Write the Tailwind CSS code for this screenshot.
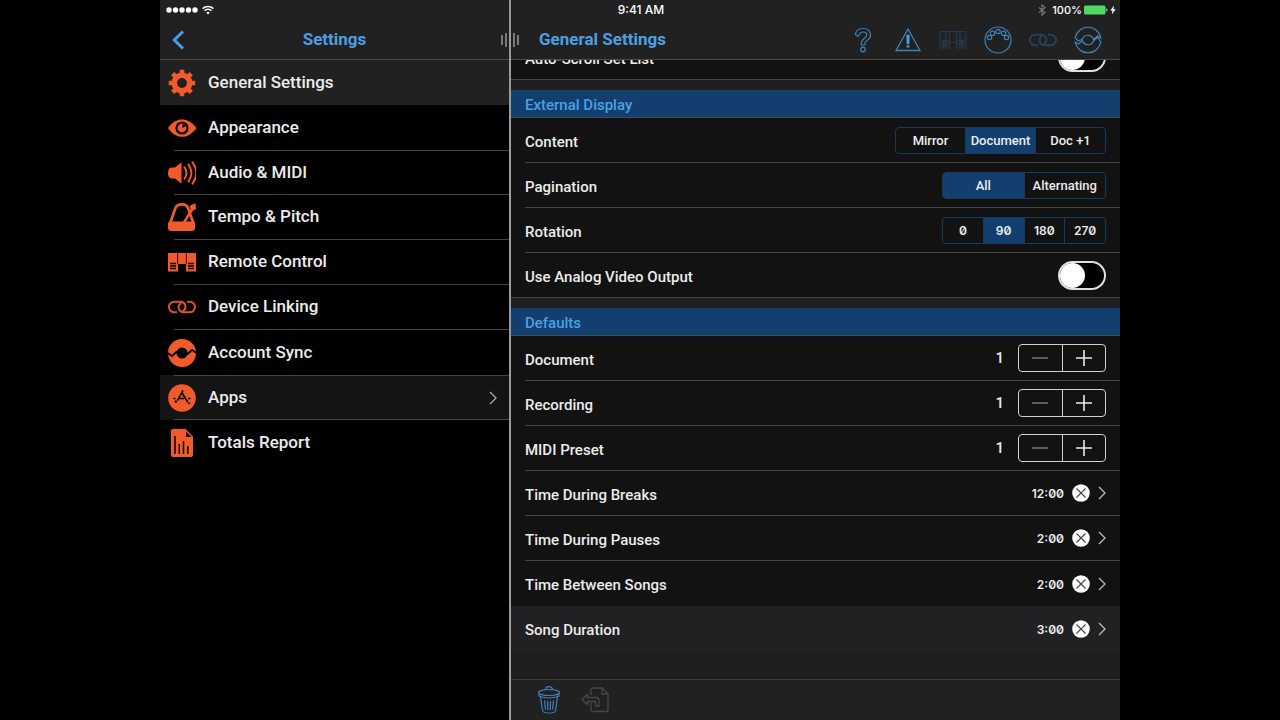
<!doctype html>
<html lang="en">
<head>
  <meta charset="UTF-8">
  <meta name="viewport" content="width=device-width, initial-scale=1.0">
  <title>General Settings</title>
  <script src="https://cdn.jsdelivr.net/npm/@tailwindcss/browser@4"></script>
</head>
<body class="bg-black font-['Roboto',sans-serif] text-white">
  <!-- Shared icons -->
  <svg class="hidden" aria-hidden="true">
    <symbol id="chevron" viewBox="0 0 8 14"><path d="M1 1l6 6-6 6" fill="none" stroke="currentColor" stroke-width="1.3" /></symbol>
    <symbol id="clear" viewBox="0 0 18 18"><circle cx="9" cy="9" r="8.8" fill="#fff" /><path d="M4.5 4.5l9 9M13.5 4.5l-9 9" stroke="#444" stroke-width="1.1" /></symbol>
    <symbol id="minus" viewBox="0 0 16 16"><path d="M0 8h16" stroke="currentColor" stroke-width="1.3" /></symbol>
    <symbol id="plus" viewBox="0 0 16 16"><path d="M0 8h16M8 0v16" stroke="currentColor" stroke-width="1.6" /></symbol>
    <symbol id="link" viewBox="0 0 28 28">
      <path d="M9 19.300H6.300a5.300 5.300 0 0 1 0-10.600H13a4.900 4.900 0 0 1 1.800 9.200M19 8.700h2.700a5.300 5.300 0 0 1 0 10.600H15a4.900 4.900 0 0 1-1.800-9.200" fill="none" stroke="currentColor" />
    </symbol>
  </svg>

  <div class="relative mx-auto flex h-screen w-3/4">
    <!-- Status bar -->
    <div class="absolute inset-x-0 top-0 z-10 grid h-5 grid-cols-3 items-center pl-1.5 pr-1 font-['Inter',sans-serif] text-xs font-medium">
      <div class="flex items-center gap-1">
        <svg class="h-2 w-8" viewBox="0 0 32 8" fill="#fff"><circle cx="3" cy="4" r="2.7" /><circle cx="9.500" cy="4" r="2.7" /><circle cx="16" cy="4" r="2.7" /><circle cx="22.500" cy="4" r="2.7" /><circle cx="29" cy="4" r="2.7" /></svg>
        <svg class="h-2.5 w-3" viewBox="0 0 12 10" fill="none" stroke="#fff" stroke-width="1.5"><path d="M.6 3.600a7.700 7.700 0 0 1 10.800 0M2.500 5.800a5 5 0 0 1 7 0" /><path d="M4.300 7.600a2.500 2.500 0 0 1 3.400 0L6 9.400z" fill="#fff" stroke="none" /></svg>
      </div>
      <span class="text-center">9:41 AM</span>
      <div class="flex items-center justify-end gap-0.5">
        <svg class="mr-1 h-3 w-2" viewBox="0 0 8 12" fill="none" stroke="#77777a" stroke-width="1.1"><path d="M1 3.500l6 5L4 11.200V.8l3 2.700-6 5" /></svg>
        <span class="text-[11px]">100%</span>
        <svg class="h-2.5 w-6" viewBox="0 0 24 10"><rect x="0" y=".5" width="21.500" height="9" rx="1.500" fill="#4cd964" /><path d="M22.300 3.200a2 2 0 0 1 0 3.600z" fill="#ddd" /></svg>
        <svg class="h-2.5 w-1.5" viewBox="0 0 6 10" fill="#fff"><path d="M4 .5L.3 5.600h2.200L1.800 9.500l3.900-5.300H3.400z" /></svg>
      </div>
    </div>

    <!-- Sidebar -->
    <aside class="flex w-[349px] shrink-0 flex-col">
      <header class="flex h-15 items-center border-b border-[#4a4a4b] bg-[#212122] px-3 pt-5">
        <button class="w-8 text-[#4aa0e2]" aria-label="Back">
          <svg class="h-5 w-3" viewBox="0 0 12 20" fill="none" stroke="currentColor" stroke-width="3"><path d="M11 1.500L2.300 10l8.700 8.500" /></svg>
        </button>
        <h2 class="flex-1 pr-8 text-center text-[17px] font-bold text-[#4aa0e2]">Settings</h2>
      </header>
      <nav class="text-[17px] font-medium text-[#ececec]">
        <a href="#" class="flex h-[45px] items-center gap-3 bg-[#212122] pl-2">
          <svg class="size-7" viewBox="0 0 28 28"><circle cx="14" cy="14" r="7.700" fill="none" stroke="#f15a29" stroke-width="5.500" /><path d="M14 .8v5M14 22.200v5M.8 14h5M22.200 14h5M4.700 4.700l3.500 3.500M19.800 19.800l3.500 3.500M4.700 23.300l3.500-3.500M19.800 8.200l3.500-3.500" stroke="#f15a29" stroke-width="4.600" stroke-linejoin="round" /></svg>
          General Settings
        </a>
        <a href="#" class="flex h-[45px] items-center pl-2">
          <svg class="mr-3 size-7" viewBox="0 0 28 28"><path d="M0 14C4 8 9 5.400 14 5.400S24 8 28.500 14C24 20 19 22.800 14 22.800S4 20 0 14z" fill="#f15a29" /><circle cx="14" cy="14" r="5.500" fill="none" stroke="#000" stroke-width="2.200" /><path d="M14.500 14V9.500L18 12z" fill="#000" /></svg>
          Appearance
        </a>
        <a href="#" class="ml-3.5 flex h-[45px] items-center border-y border-[#454545]">
          <svg class="-ml-1.5 mr-3 size-7" viewBox="0 0 28 28"><path d="M3 8.500h4l6.500-5.300v21.600L7 19.500H3q-3-1-3-5.500t3-5.500z" fill="#f15a29" /><path d="M16.500 8.200q4 5.800 0 11.600M20.500 5.600q6 8.400 0 16.800M24.500 3.300q7.500 10.700 0 21.400" fill="none" stroke="#f15a29" stroke-width="1.900" stroke-linecap="round" /></svg>
          Audio &amp; MIDI
        </a>
        <a href="#" class="ml-3.5 flex h-[45px] items-center border-b border-[#454545]">
          <svg class="-ml-1.5 mr-3 size-7" viewBox="0 0 28 28"><path d="M2 20.500L7.500 5q1.500-3.600 6.500-3.600 4.500 0 6 3.600l5.500 15.500" fill="none" stroke="#f15a29" stroke-width="2.700" /><path d="M0 20.500q0-2 2.500-2h22q2.500 0 2.500 2v4.200q0 3.300-3.300 3.300H3.300Q0 28 0 24.700z" fill="#f15a29" /><path d="M16 19.500L25 5" stroke="#f15a29" stroke-width="2.500" /><path d="M21.500 3l6-3 .5 6-4.500 2.500z" fill="#f15a29" /></svg>
          Tempo &amp; Pitch
        </a>
        <a href="#" class="ml-3.5 flex h-[45px] items-center border-b border-[#454545]">
          <svg class="-ml-1.5 mr-3 size-7" viewBox="0 0 28 28"><path d="M0 5h28v18.500H18V16h-8v7.500H0z" fill="#f15a29" /><path d="M9.700 5v11.500M18.300 5v11.500" stroke="#000" stroke-width=".8" /><path d="M2 15.500h6M2 18h6M2 20.500h6M20 15.500h6M20 18h6M20 20.500h6" stroke="#000" stroke-width="1.300" /></svg>
          Remote Control
        </a>
        <a href="#" class="ml-3.5 flex h-[45px] items-center border-b border-[#454545]">
          <svg class="-ml-1.5 mr-3 size-7 stroke-[2px] text-[#d9542b]"><use href="#link" /></svg>
          Device Linking
        </a>
        <a href="#" class="ml-3.5 flex h-[45px] items-center">
          <svg class="-ml-1.5 mr-3 size-7" viewBox="0 0 28 28"><circle cx="14" cy="14" r="14" fill="#f15a29" /><circle cx="14" cy="14" r="5.500" fill="#000" /><path d="M-.5 14l4.500 3 5-4.500M19 15.500l5-4.500 4.500 3" fill="none" stroke="#000" stroke-width="2" /></svg>
          Account Sync
        </a>
        <a href="#" class="flex h-[45px] items-center bg-[#141415] pl-3.5">
          <span class="flex h-full flex-1 items-center border-y border-[#454545]">
            <svg class="-ml-1.5 mr-3 size-7" viewBox="0 0 28 28"><circle cx="14" cy="14" r="13.800" fill="#f15a29" /><path d="M15 6.500l-5.500 10M13.500 8l6.500 10.500M5.500 14.500h2M10 14.500h6M20 14.500h2.500" fill="none" stroke="#000" stroke-width="1.600" /><path d="M8.300 16.500l-1 2.200M20.800 18.700l.8 1.200" stroke="#000" stroke-width="2" /></svg>
            Apps
            <svg class="ml-auto mr-3 h-3.5 w-2 text-[#aaa]"><use href="#chevron" /></svg>
          </span>
        </a>
        <a href="#" class="flex h-[45px] items-center gap-3 pl-2">
          <svg class="size-7" viewBox="0 0 28 28"><path d="M5 0h12.500L25 7.500V26q0 2-2 2H5q-2 0-2-2V2q0-2 2-2z" fill="#f15a29" /><path d="M18 2.500V8h5.500z" fill="#000" /><path d="M7 7v18M11.300 15v10M15.500 12v13M19.800 17v8" stroke="#000" stroke-width="1.500" /></svg>
          Totals Report
        </a>
      </nav>
    </aside>

    <!-- Detail pane -->
    <main class="relative flex min-w-0 flex-1 flex-col border-l-2 border-[#9a9a9a] bg-[#1f1f20]">
      <!-- Pane resize grip -->
      <svg class="absolute -left-2.5 top-8 h-4 w-5" viewBox="0 0 20 16" stroke="#b5b5b5" stroke-width="1.200"><path d="M1 3v10M5 1v14M13 1v14M17 3v10" /></svg>
      <header class="flex h-15 shrink-0 items-center justify-between border-b border-[#4a4a4b] bg-[#212122] pl-7 pr-4.5 pt-5">
        <h1 class="text-[17px] font-bold text-[#4aa0e2]">General Settings</h1>
        <div class="flex gap-[17px] text-[#3f81b8]">
          <button aria-label="Help"><svg class="size-7" viewBox="0 0 28 28" fill="none" stroke="currentColor" stroke-width="1.200"><path d="M6.500 8.500Q7 2.500 14 2.500t7.500 6.500q0 3.500-3.500 5.500-2.300 1.500-2.300 4.500h-3.500q0-4.500 3-6.500 2.500-1.500 2.500-3.500 0-3-3.500-3T10 9.500q-1.500 1.500-3.500-1z" /><circle cx="14" cy="23.500" r="2.300" /></svg></button>
          <button aria-label="Warnings"><svg class="size-7" viewBox="0 0 28 28" fill="none" stroke="currentColor" stroke-width="1.300"><path d="M14 3L26 24.500H2z" /><path d="M13 9.500h2l-.3 8h-1.400z" fill="#4aa0e2" stroke="#4aa0e2" /><path d="M14 19.500v2" stroke="#4aa0e2" stroke-width="3" /></svg></button>
          <button aria-label="Remote control" class="text-[#26384c]"><svg class="size-7" viewBox="0 0 28 28" fill="none" stroke="currentColor" stroke-width="1.200"><path d="M1 5.500h26V22H17.500v-5.500h-7V22H1zM7 5.500v8M10.500 5.500v11M17.500 5.500v11M21 5.500v8" /><path d="M3 14.500h6M3 17h6M3 19.500h6M19.500 14.500h6M19.500 17h6M19.500 19.500h6" stroke-width="1.800" /></svg></button>
          <button aria-label="MIDI"><svg class="size-7" viewBox="0 0 28 28" fill="none" stroke="currentColor" stroke-width="1.200"><circle cx="14" cy="14" r="13" /><circle cx="5.500" cy="11.500" r="2.200" /><circle cx="8.500" cy="7.300" r="2.200" /><circle cx="14" cy="5.500" r="2.200" /><circle cx="19.500" cy="7.300" r="2.200" /><circle cx="22.500" cy="11.500" r="2.200" /></svg></button>
          <button aria-label="Device linking" class="text-[#264059]"><svg class="size-7 stroke-[2px]"><use href="#link" /></svg></button>
          <button aria-label="Sync"><svg class="size-7" viewBox="0 0 28 28" fill="none" stroke="currentColor" stroke-width="1.200"><path d="M1.200 12a13 13 0 0 1 25.600 0l-3.300-2-4 3.500a5.800 5.800 0 0 0-11-.5L4.500 15zM26.800 16a13 13 0 0 1-25.600 0l3.300 2 4-3.500a5.800 5.800 0 0 0 11 .5l4-3.500z" /></svg></button>
        </div>
      </header>

      <div class="min-h-0 flex-1 overflow-hidden text-[15px] font-medium text-[#ececec]">
        <section class="-mt-[25px] mb-2.5 bg-[#121213]">
          <label class="flex h-[45px] items-center justify-between border-b border-[#454545] px-3.5">
            <span class="pt-1">Auto-Scroll Set List</span>
            <input type="checkbox" class="h-[29px] w-12 appearance-none rounded-full border-2 border-[#e0e0e0] bg-black before:block before:size-[25px] before:rounded-full before:bg-white checked:bg-[#123f6e] checked:before:ml-auto">
          </label>
        </section>

        <section class="mb-2.5 bg-[#121213]">
          <h3 class="flex h-7 items-center border-b border-[#37506b] bg-[#123f6e] px-3.5 pt-1 text-[#4aa0e2]">External Display</h3>
          <fieldset class="ml-3.5 flex h-[45px] items-center border-b border-[#454545] pr-3.5" aria-labelledby="content-label">
            <span id="content-label" class="flex-1 pt-1">Content</span>
            <div class="flex h-[27px] w-[211px] divide-x divide-[#17395f] overflow-hidden rounded border border-[#17395f] text-[13px]">
              <label class="relative flex flex-1 items-center justify-center pt-0.5 has-checked:bg-[#123f6e]"><input type="radio" name="content" class="sr-only">Mirror</label>
              <label class="relative flex flex-1 items-center justify-center pt-0.5 has-checked:bg-[#123f6e]"><input type="radio" name="content" class="sr-only" checked>Document</label>
              <label class="relative flex flex-1 items-center justify-center pt-0.5 has-checked:bg-[#123f6e]"><input type="radio" name="content" class="sr-only">Doc +1</label>
            </div>
          </fieldset>
          <fieldset class="ml-3.5 flex h-[45px] items-center border-b border-[#454545] pr-3.5" aria-labelledby="pagination-label">
            <span id="pagination-label" class="flex-1 pt-1">Pagination</span>
            <div class="flex h-[27px] w-41 divide-x divide-[#17395f] overflow-hidden rounded border border-[#17395f] text-[13px]">
              <label class="relative flex flex-1 items-center justify-center pt-0.5 has-checked:bg-[#123f6e]"><input type="radio" name="pagination" class="sr-only" checked>All</label>
              <label class="relative flex flex-1 items-center justify-center pt-0.5 has-checked:bg-[#123f6e]"><input type="radio" name="pagination" class="sr-only">Alternating</label>
            </div>
          </fieldset>
          <fieldset class="ml-3.5 flex h-[45px] items-center border-b border-[#454545] pr-3.5" aria-labelledby="rotation-label">
            <span id="rotation-label" class="flex-1 pt-1">Rotation</span>
            <div class="flex h-[27px] w-41 divide-x divide-[#17395f] overflow-hidden rounded border border-[#17395f] font-['Inter',sans-serif] text-xs font-semibold slashed-zero">
              <label class="relative flex flex-1 items-center justify-center pt-0.5 has-checked:bg-[#123f6e]"><input type="radio" name="rotation" class="sr-only">0</label>
              <label class="relative flex flex-1 items-center justify-center pt-0.5 has-checked:bg-[#123f6e]"><input type="radio" name="rotation" class="sr-only" checked>90</label>
              <label class="relative flex flex-1 items-center justify-center pt-0.5 has-checked:bg-[#123f6e]"><input type="radio" name="rotation" class="sr-only">180</label>
              <label class="relative flex flex-1 items-center justify-center pt-0.5 has-checked:bg-[#123f6e]"><input type="radio" name="rotation" class="sr-only">270</label>
            </div>
          </fieldset>
          <label class="flex h-[45px] items-center justify-between border-b border-[#454545] px-3.5">
            <span class="pt-1">Use Analog Video Output</span>
            <input type="checkbox" class="h-[29px] w-12 appearance-none rounded-full border-2 border-[#e0e0e0] bg-black before:block before:size-[25px] before:rounded-full before:bg-white checked:bg-[#123f6e] checked:before:ml-auto">
          </label>
        </section>

        <section class="bg-[#121213]">
          <h3 class="flex h-7 items-center border-b border-[#37506b] bg-[#123f6e] px-3.5 pt-1 text-[#4aa0e2]">Defaults</h3>
          <div class="ml-3.5 flex h-[45px] items-center border-b border-[#454545] pr-3.5">
            <span class="flex-1 pt-1">Document</span>
            <output class="mr-3.5">1</output>
            <div class="flex h-7 w-22 divide-x divide-[#d0d0d0] rounded border border-[#d0d0d0]">
              <button class="flex flex-1 items-center justify-center text-[#888]" aria-label="Decrease document"><svg class="size-4"><use href="#minus" /></svg></button>
              <button class="flex flex-1 items-center justify-center" aria-label="Increase document"><svg class="size-4"><use href="#plus" /></svg></button>
            </div>
          </div>
          <div class="ml-3.5 flex h-[45px] items-center border-b border-[#454545] pr-3.5">
            <span class="flex-1 pt-1">Recording</span>
            <output class="mr-3.5">1</output>
            <div class="flex h-7 w-22 divide-x divide-[#d0d0d0] rounded border border-[#d0d0d0]">
              <button class="flex flex-1 items-center justify-center text-[#888]" aria-label="Decrease recording"><svg class="size-4"><use href="#minus" /></svg></button>
              <button class="flex flex-1 items-center justify-center" aria-label="Increase recording"><svg class="size-4"><use href="#plus" /></svg></button>
            </div>
          </div>
          <div class="ml-3.5 flex h-[45px] items-center border-b border-[#454545] pr-3.5">
            <span class="flex-1 pt-1">MIDI Preset</span>
            <output class="mr-3.5">1</output>
            <div class="flex h-7 w-22 divide-x divide-[#d0d0d0] rounded border border-[#d0d0d0]">
              <button class="flex flex-1 items-center justify-center text-[#888]" aria-label="Decrease MIDI preset"><svg class="size-4"><use href="#minus" /></svg></button>
              <button class="flex flex-1 items-center justify-center" aria-label="Increase MIDI preset"><svg class="size-4"><use href="#plus" /></svg></button>
            </div>
          </div>
          <div class="ml-3.5 flex h-[45px] items-center border-b border-[#454545] pr-3.5">
            <a href="#" class="flex-1 pt-1">Time During Breaks</a>
            <span class="mr-2 pt-0.5 font-['Inter',sans-serif] text-xs font-semibold slashed-zero">12:00</span>
            <button class="mr-2" aria-label="Clear time during breaks"><svg class="size-4.5"><use href="#clear" /></svg></button>
            <svg class="h-3.5 w-2 text-[#bbb]"><use href="#chevron" /></svg>
          </div>
          <div class="ml-3.5 flex h-[45px] items-center border-b border-[#454545] pr-3.5">
            <a href="#" class="flex-1 pt-1">Time During Pauses</a>
            <span class="mr-2 pt-0.5 font-['Inter',sans-serif] text-xs font-semibold slashed-zero">2:00</span>
            <button class="mr-2" aria-label="Clear time during pauses"><svg class="size-4.5"><use href="#clear" /></svg></button>
            <svg class="h-3.5 w-2 text-[#bbb]"><use href="#chevron" /></svg>
          </div>
          <div class="ml-3.5 flex h-[45px] items-center pr-3.5">
            <a href="#" class="flex-1 pt-1">Time Between Songs</a>
            <span class="mr-2 pt-0.5 font-['Inter',sans-serif] text-xs font-semibold slashed-zero">2:00</span>
            <button class="mr-2" aria-label="Clear time between songs"><svg class="size-4.5"><use href="#clear" /></svg></button>
            <svg class="h-3.5 w-2 text-[#bbb]"><use href="#chevron" /></svg>
          </div>
          <div class="flex h-[45px] items-center bg-[#212123] px-3.5">
            <a href="#" class="flex-1 pt-1">Song Duration</a>
            <span class="mr-2 pt-0.5 font-['Inter',sans-serif] text-xs font-semibold slashed-zero">3:00</span>
            <button class="mr-2" aria-label="Clear song duration"><svg class="size-4.5"><use href="#clear" /></svg></button>
            <svg class="h-3.5 w-2 text-[#bbb]"><use href="#chevron" /></svg>
          </div>
        </section>
      </div>

      <footer class="flex h-[41px] shrink-0 items-center gap-5 border-t border-[#3c3c3d] bg-[#212122] pl-6.5">
        <button class="text-[#3f81b8]" aria-label="Delete"><svg class="h-7 w-6" viewBox="0 0 24 28" fill="none" stroke="currentColor" stroke-width="1.200"><path d="M8.500 3.500a3.500 2.800 0 0 1 7 0M2 7.500v2.500q10 4 20 0V7.500M3.500 11l2 13.500Q6 27 12 27t6.500-2.500l2-13.500M7.500 14.500l1 9M10.500 15l.3 9M13.500 15l-.3 9M16.500 14.500l-1 9" /><ellipse cx="12" cy="6.500" rx="10.500" ry="3" /></svg></button>
        <button class="text-[#47474a]" aria-label="Export" disabled><svg class="h-7 w-7" viewBox="0 0 28 28" fill="none" stroke="currentColor" stroke-width="1.300"><path d="M10 9V4q0-2 2-2h9l6 6v15.500q0 2-2 2H12q-2 0-2-2V17M21 2v6h6" /><path d="M1 13.500l5.500-5V11.500H15q3 0 3 3V20h-3.500v-4.500h-8v3z" /></svg></button>
      </footer>
    </main>
  </div>
</body>
</html>
